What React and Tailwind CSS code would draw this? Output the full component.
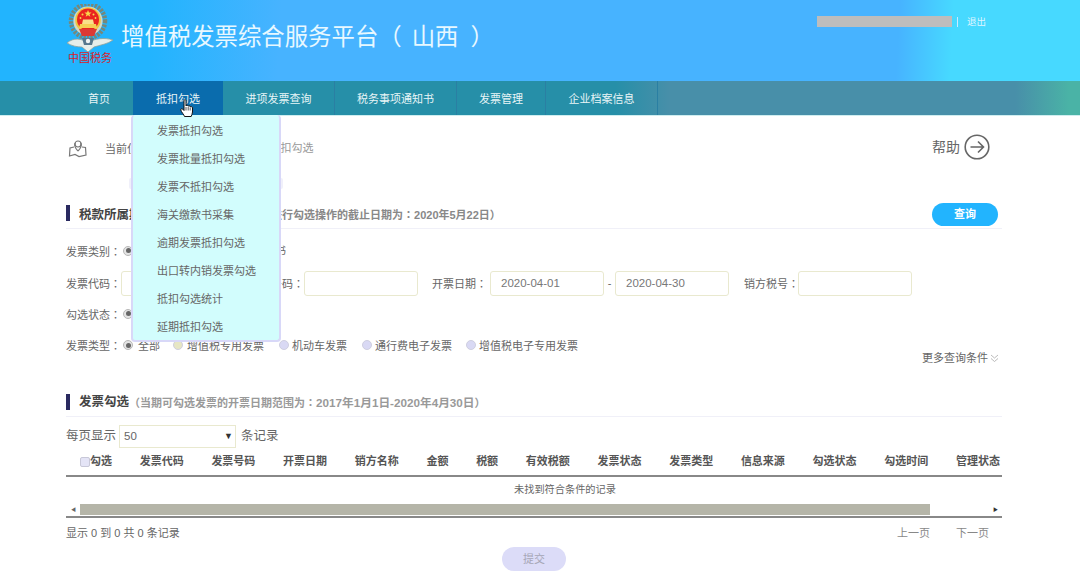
const font = "font-['Liberation_Sans','Noto_Sans_CJK_SC',sans-serif]";

function Emblem() {
  return (
    <svg width="46" height="48" viewBox="0 0 46 48" className="block">
      <circle cx="21" cy="17" r="17" fill="none" stroke="#75887c" strokeWidth="4.5" strokeDasharray="2.4 1.2" />
      <circle cx="21" cy="17" r="14.6" fill="#d4d8c8" />
      <circle cx="21" cy="16" r="12.8" fill="#eec63f" />
      <circle cx="21" cy="15.5" r="11" fill="#ea2420" />
      <path d="M21 6 L22 8.6 L24.6 8.6 L22.5 10.2 L23.3 12.8 L21 11.2 L18.7 12.8 L19.5 10.2 L17.4 8.6 L20 8.6Z" fill="#f8d84c" />
      <circle cx="15.5" cy="10.5" r="1" fill="#f8d84c" />
      <circle cx="26.5" cy="10.5" r="1" fill="#f8d84c" />
      <circle cx="13.5" cy="14" r=".9" fill="#f8d84c" />
      <circle cx="28.5" cy="14" r=".9" fill="#f8d84c" />
      <path d="M13 20 L29 20 L30 24 L12 24Z" fill="#f5cf55" />
      <path d="M16 15.5 L26 15.5 L27 20 L15 20Z" fill="#f9e08a" />
      <path d="M12 25 L30 25 L27 32 L15 32Z" fill="#dc3a34" />
      <path d="M0 39 C7 33 14 35 21 38 C28 35 37 33 46 36 C41 40 33 41 27 43 L21 48 L15 43 C10 43 5 42 0 39Z" fill="#e6eeea" stroke="#8ea29c" strokeWidth="0.8" />
      <path d="M15 34 L27 34 L25 41 L17 41Z" fill="#56788e" />
      <circle cx="21" cy="37" r="2.2" fill="#eef3f3" />
    </svg>
  );
}

function Hand() {
  return (
    <svg width="14" height="19" viewBox="0 0 14 19" className="block">
      <path d="M4 1.5 C4 .5 6 .5 6 1.5 L6 7 C6.5 6 8 6 8.2 7.2 C8.8 6.4 10 6.6 10.2 7.8 C11 7.3 12.5 7.6 12.5 9 L12.5 13 C12.5 15 11.5 16 11.2 17.5 L4.5 17.5 C4 15.5 1.2 13 .8 11 C.5 9.8 2 9.3 2.8 10.2 L4 11.5Z" fill="#fff" stroke="#111" strokeWidth="1" strokeLinejoin="round" />
      <path d="M6 8 V11.5 M8.2 8 V11.5 M10.2 8.5 V11.5" stroke="#111" strokeWidth=".7" />
    </svg>
  );
}

function Radio({ on, tint = "bg-[#d9d9f4]", className = "" }) {
  return on ? (
    <span className={`w-[10px] h-[10px] shrink-0 rounded-full bg-[#e4e4e4] border border-[#b8b8b8] flex items-center justify-center -mt-[2px] ${className}`}>
      <span className="w-[5px] h-[5px] rounded-full bg-[#666]" />
    </span>
  ) : (
    <span className={`w-[10px] h-[10px] shrink-0 rounded-full border border-[#cfcfe0] -mt-[2px] ${tint} ${className}`} />
  );
}

function Colon() {
  return <span className="font-['Noto_Sans_CJK_TC',sans-serif]">：</span>;
}

function Label({ w, className = "", children }) {
  return <span className={`shrink-0 ${w} ${className}`}>{children}<Colon /></span>;
}

function Field({ className = "", children }) {
  return (
    <div className={`w-[114px] h-[25px] shrink-0 rounded-[3px] border border-[#e9e9cf] bg-white px-[10px] flex items-center text-[11.5px] text-[#777] ${className}`}>
      {children}
    </div>
  );
}

const navItems = [
  ["首页", "w-[67px] pl-[22px]"],
  ["抵扣勾选", "w-[90px] justify-center bg-[#0a6cad]"],
  ["进项发票查询", "w-[112px] justify-center border-r border-[#2a7fa3]"],
  ["税务事项通知书", "w-[122px] justify-center border-r border-[#2a7fa3]"],
  ["发票管理", "w-[89px] justify-center border-r border-[#2a7fa3]"],
  ["企业档案信息", "w-[112px] justify-center border-r border-[#2a7fa3]"],
];
const menuItems = ["发票抵扣勾选", "发票批量抵扣勾选", "发票不抵扣勾选", "海关缴款书采集", "逾期发票抵扣勾选", "出口转内销发票勾选", "抵扣勾选统计", "延期抵扣勾选"];
const heads = ["发票代码", "发票号码", "开票日期", "销方名称", "金额", "税额", "有效税额", "发票状态", "发票类型", "信息来源", "勾选状态", "勾选时间", "管理状态"];

export default function App() {
  return (
    <div className={`w-[1080px] h-[583px] overflow-hidden bg-white text-[11px] leading-none text-[#666] ${font}`}>
      <header className="h-[81px] flex bg-[linear-gradient(93deg,#22b4fe_0%,#22b4fe_14%,#47b3ff_26%,#47b3ff_83%,#47d9ff_88%)]">
        <div className="ml-[67px] mt-[4px] w-[46px] flex flex-col items-center shrink-0">
          <Emblem />
          <div className="mt-[1px] text-[11px] text-[#d9202a] whitespace-nowrap">中国税务</div>
        </div>
        <div className="ml-[8px] mt-[22px] h-[30px] text-[23.4px] leading-[30px] text-[#e8f8ff] whitespace-nowrap flex">
          <span>增值税发票综合服务平台（</span>
          <span className="ml-[10px]">山西</span>
          <span className="ml-[12px]">）</span>
        </div>
        <div className="ml-auto mr-[94px] mt-[16px] h-[11px] flex items-center text-[#dff5ff] text-[9.5px]">
          <div className="w-[135px] h-[11px] bg-[#bdbdbd]" />
          <span className="ml-[5px] w-[1px] h-[10px] bg-[#cbeaff]" />
          <span className="ml-[9px]">退出</span>
        </div>
      </header>

      <nav className="relative z-10 h-[35px] flex pl-[66px] border-b border-[#cfeef0] text-[11px] text-[#e8f5f7] bg-[linear-gradient(90deg,#268fa8_0%,#268fa8_57%,#488fa9_62%,#488fa9_94%,#4ab3a6_99%)]">
        {navItems.map(([t, c], i) => (
          <div key={t} className={`relative h-full flex items-center pt-[2px] whitespace-nowrap shrink-0 ${c}`}>
            {t}
            {i === 1 && (
              <>
                <div className="absolute left-[-2px] top-[34px] w-[150px] h-[227px] pt-[2px] rounded-[4px] border-2 border-t-0 border-[#d8d8f8] bg-[#d2fdfd] text-[#666] z-10">
                  {menuItems.map((m) => (
                    <div key={m} className="h-[28px] pl-[24px] flex items-center whitespace-nowrap">{m}</div>
                  ))}
                </div>
                <div className="absolute left-[47px] top-[18px] z-20"><Hand /></div>
              </>
            )}
          </div>
        ))}
      </nav>

      <main className="pl-[66px] w-[1002px]">
        <div className="mt-[14px] h-[35px] flex items-center">
          <svg width="20" height="20" viewBox="0 0 20 20" fill="none" stroke="#777" strokeWidth="1.2" className="ml-[2px]">
            <circle cx="10" cy="6" r="3" />
            <path d="M10 13 C7 10 6 8 7 5 M10 13 C13 10 14 8 13 5" />
            <path d="M6 9 L2 10 L1.5 18 L7 16.5 L11 18.5 L18 17 L17.5 9.5 L14 9" />
          </svg>
          <span className="ml-[17px] pt-[2px] whitespace-nowrap">当前位置<Colon /></span>
          <span className="ml-[31px] pt-[2px] whitespace-nowrap text-[#999]">抵扣勾选 &gt; 发票抵扣勾选</span>
          <div className="ml-auto mr-[12px] -mt-[2px] flex items-center">
            <span className="text-[14px] text-[#666]">帮助</span>
            <svg width="26" height="26" viewBox="0 0 26 26" fill="none" stroke="#666" strokeWidth="1.6" className="ml-[4px]">
              <circle cx="13" cy="13" r="11.8" />
              <path d="M6.5 13 H19.5 M14 7.5 L19.5 13 L14 18.5" />
            </svg>
          </div>
        </div>

        <div className="mt-[13px] ml-[63px] w-[154px] h-[11px] rounded-[2px] bg-[#f0f0fa]" />

        <div className="mt-[14px] h-[26px] flex items-start border-b border-[#f0f0f8]">
          <span className="mt-[2px] w-[4px] h-[16px] bg-[#2a2a60]" />
          <span className="ml-[9px] mt-[5px] text-[12.5px] font-bold text-[#444] whitespace-nowrap">税款所属期<Colon /></span>
          <span className="ml-[18px] mt-[6px] text-[11px] font-bold text-[#888] whitespace-nowrap">（当前税款所属期可进行勾选操作的截止日期为<Colon />2020年5月22日）</span>
          <button className="ml-auto mr-[4px] w-[66px] h-[23px] rounded-full bg-[#22b4fe] text-white font-bold text-[11px]">查询</button>
        </div>

        <div className="mt-[11px] h-[22px] pt-[1px] flex items-center whitespace-nowrap">
          <Label w="w-[57px]">发票类别</Label>
          <Radio on />
          <span className="ml-[4px]">增值税发票</span>
          <Radio className="ml-[29px]" />
          <span>海关缴款书</span>
        </div>

        <div className="mt-[9px] h-[25px] flex items-center whitespace-nowrap">
          <Label w="w-[55px]">发票代码</Label>
          <Field />
          <Label w="w-[55px]" className="ml-[14px]">发票号码</Label>
          <Field />
          <Label w="w-[58px]" className="ml-[14px]">开票日期</Label>
          <Field>2020-04-01</Field>
          <span className="w-[11px] text-center shrink-0">-</span>
          <Field>2020-04-30</Field>
          <Label w="w-[54px]" className="ml-[15px]">销方税号</Label>
          <Field />
        </div>

        <div className="mt-[7px] h-[22px] pt-[1px] flex items-center whitespace-nowrap">
          <Label w="w-[57px]">勾选状态</Label>
          <Radio on />
          <span className="ml-[4px]">全部</span>
        </div>

        <div className="mt-[14px] h-[13px] pt-[1px] flex items-center whitespace-nowrap">
          <Label w="w-[57px]">发票类型</Label>
          <Radio on />
          <span className="ml-[5px]">全部</span>
          <Radio tint="bg-[#e6e6c4]" className="ml-[13px]" />
          <span className="ml-[4px]">增值税专用发票</span>
          <Radio className="ml-[15px]" />
          <span className="ml-[3px]">机动车发票</span>
          <Radio className="ml-[15px]" />
          <span className="ml-[3px]">通行费电子发票</span>
          <Radio className="ml-[14px]" />
          <span className="ml-[3px]">增值税电子专用发票</span>
        </div>

        <div className="h-[12px] flex items-center justify-end pr-[3px] whitespace-nowrap">
          <span>更多查询条件</span>
          <svg width="9" height="9" viewBox="0 0 9 9" fill="none" stroke="#aaa" strokeWidth=".8" className="ml-[2px]">
            <path d="M1 1 L4.5 4 L8 1 M1 4.5 L4.5 7.5 L8 4.5" />
          </svg>
        </div>

        <div className="mt-[30px] h-[23px] flex items-start border-b border-[#f0f0f8] whitespace-nowrap">
          <span className="w-[4px] h-[16px] bg-[#2a2a60]" />
          <span className="ml-[9px] mt-[2px] text-[12.5px] font-bold text-[#444]">发票勾选</span>
          <span className="mt-[3px] text-[11px] font-bold text-[#999]">（当期可勾选发票的开票日期范围为<Colon /><span className="text-[11.7px]">2017年1月1日-2020年4月30日</span>）</span>
        </div>

        <div className="mt-[8px] h-[23px] flex items-center text-[12.5px] whitespace-nowrap">
          <span className="w-[53px]">每页显示</span>
          <div className="w-[117px] h-[23px] border border-[#e9e9cf] flex items-center px-[4px] text-[11.5px] text-[#666]">
            <span>50</span>
            <span className="ml-auto -mr-[2px] text-[9px] text-[#333]">▼</span>
          </div>
          <span className="ml-[5px]">条记录</span>
        </div>

        <div className="h-[29px] pl-[14px] flex items-center gap-[27.7px] border-b-2 border-[#888] whitespace-nowrap font-bold text-[#555]">
          <span className="flex items-center">
            <span className="w-[10px] h-[10px] rounded-[2px] border border-[#c8c8d8] bg-[#e4e4f6]" />
            <span>勾选</span>
          </span>
          {heads.map((h) => <span key={h}>{h}</span>)}
        </div>

        <div className="h-[27px] pl-[62px] flex items-center justify-center text-[10.2px]">未找到符合条件的记录</div>

        <div className="h-[14px] flex items-center border-b-2 border-[#888] pb-[1px]">
          <span className="w-[14px] pl-[5px] text-[5px] text-[#666]">◀</span>
          <div className="w-[850px] h-[11px] bg-[#b5b5a8]" />
          <span className="ml-auto mr-[4px] text-[5px] text-[#333]">▶</span>
        </div>

        <div className="mt-[6px] h-[18px] flex items-center whitespace-nowrap">
          <span>显示 0 到 0 共 0 条记录</span>
          <span className="ml-auto text-[#888]">上一页</span>
          <span className="ml-[26px] mr-[13px] text-[#888]">下一页</span>
        </div>

        <button className="mt-[5px] ml-[436px] block w-[64px] h-[24px] rounded-full bg-[#dcdcf8] text-[#a5a5b5] text-[11px]">提交</button>
      </main>
    </div>
  );
}
